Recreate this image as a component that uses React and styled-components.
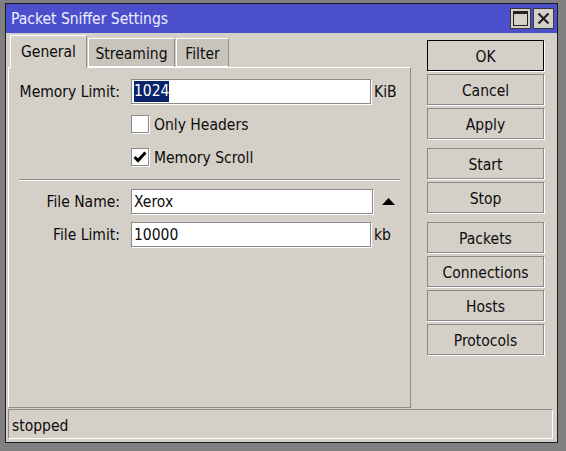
import React from "react";
import styled, { createGlobalStyle } from "styled-components";

const Global = createGlobalStyle`
  html, body {
    margin: 0;
    padding: 0;
    background: #808080;
  }
  body {
    font-family: "DejaVu Sans Condensed", "DejaVu Sans", sans-serif;
    font-size: 15.5px;
    color: #0c0c0c;
  }
  * { box-sizing: border-box; }
`;

const Window = styled.div`
  margin: 3px 0 0 5px;
  width: 553px;
  height: 440px;
  border: 1px solid #1c1c1c;
  display: flex;
  flex-direction: column;
  background: #d4d0c8;
`;

const TitleBar = styled.div`
  height: 29px;
  background: #4b4fcb;
  display: flex;
  align-items: center;
  padding: 0 3px 0 5px;
  color: #eef0ff;
`;

const Title = styled.div`
  flex: 1;
  font-size: 15.5px;
  padding-top: 1px;
`;

const TitleButton = styled.div`
  width: 21px;
  height: 21px;
  margin-left: 2px;
  background: #d4d0c8;
  border: 1px solid #3a3a3a;
  display: flex;
  align-items: center;
  justify-content: center;
`;

const Body = styled.div`
  flex: 1;
  display: flex;
  flex-direction: column;
  padding: 2px 4px 3px 2px;
`;

const Main = styled.div`
  flex: 1;
  display: flex;
`;

const LeftCol = styled.div`
  width: 403px;
  display: flex;
  flex-direction: column;
`;

const Tabs = styled.div`
  height: 32px;
  display: flex;
  align-items: flex-end;
  padding-left: 2px;
  position: relative;
  z-index: 1;
`;

const Tab = styled.div`
  height: ${(p) => (p.$active ? "33px" : "29px")};
  margin-bottom: ${(p) => (p.$active ? "-1px" : "0")};
  width: ${(p) => p.$w}px;
  margin-right: 1px;
  display: flex;
  align-items: center;
  justify-content: center;
  padding-bottom: ${(p) => (p.$active ? "1px" : "0")};
  padding-top: ${(p) => (p.$active ? "0" : "2px")};
  background: ${(p) => (p.$active ? "#d4d0c8" : "#c8c4bc")};
  border-top: 1px solid #ffffff;
  border-left: 1px solid #ffffff;
  border-right: 1px solid #8c8c8c;
  border-bottom: ${(p) => (p.$active ? "none" : "1px solid #ffffff")};
`;

const Panel = styled.div`
  flex: 1;
  border-top: 1px solid #ffffff;
  border-left: 1px solid #ffffff;
  border-right: 1px solid #8a8a8a;
  border-bottom: 1px solid #8a8a8a;
  padding-top: 11px;
  display: flex;
  flex-direction: column;
`;

const Row = styled.div`
  display: flex;
  align-items: center;
  margin-top: ${(p) => p.$mt || 0}px;
  height: ${(p) => p.$h || 25}px;
`;

const Label = styled.div`
  width: 122px;
  padding-left: 10px;
  padding-right: 11px;
  text-align: right;
  white-space: nowrap;
`;

const Input = styled.div`
  width: ${(p) => p.$w}px;
  height: 25px;
  background: #ffffff;
  border: 1px solid #8a8a8a;
  box-shadow: 1px 1px 0 #ffffff;
  display: flex;
  align-items: center;
  padding-left: 2px;
`;

const Selected = styled.span`
  background: #0a246a;
  color: #ffffff;
  padding: 1px 0 2px;
`;

const Unit = styled.div`
  margin-left: 3px;
`;

const CheckBox = styled.div`
  width: 18px;
  height: 18px;
  background: #ffffff;
  border: 1px solid #8a8a8a;
  box-shadow: 1px 1px 0 #ffffff;
  margin-left: 122px;
  margin-right: 5px;
  display: flex;
  align-items: center;
  justify-content: center;
`;

const CheckLabel = styled.span`
  padding-top: 2px;
`;

const Separator = styled.div`
  margin: 13px 10px 0 10px;
  height: 2px;
  border-top: 1px solid #8a8a8a;
  border-bottom: 1px solid #ffffff;
`;

const RightCol = styled.div`
  margin-left: 16px;
  padding-top: 5px;
  width: 117px;
  display: flex;
  flex-direction: column;
`;

const Button = styled.div`
  height: 31px;
  margin-top: ${(p) => p.$mt}px;
  border: 1px solid ${(p) => (p.$default ? "#000000" : "#8a8a8a")};
  box-shadow: 1px 1px 0 #ffffff;
  display: flex;
  align-items: center;
  justify-content: center;
  padding-top: 2px;
`;

const StatusBar = styled.div`
  margin-top: 1px;
  height: 30px;
  border-top: 1px solid #8a8a8a;
  border-left: 1px solid #8a8a8a;
  border-right: 1px solid #ffffff;
  border-bottom: 1px solid #ffffff;
  display: flex;
  align-items: center;
  padding: 3px 0 0 3px;
`;

const buttons = [
  { label: "OK", mt: 0, def: true },
  { label: "Cancel", mt: 3 },
  { label: "Apply", mt: 3 },
  { label: "Start", mt: 9 },
  { label: "Stop", mt: 3 },
  { label: "Packets", mt: 9 },
  { label: "Connections", mt: 3 },
  { label: "Hosts", mt: 3 },
  { label: "Protocols", mt: 3 },
];

export default function App() {
  return (
    <>
      <Global />
      <Window>
        <TitleBar>
          <Title>Packet Sniffer Settings</Title>
          <TitleButton>
            <svg width="15" height="15" viewBox="0 0 15 15">
              <rect x="0.5" y="0.5" width="14" height="14" fill="none" stroke="#222" />
              <rect x="0" y="0" width="15" height="3" fill="#222" />
            </svg>
          </TitleButton>
          <TitleButton>
            <svg width="13" height="13" viewBox="0 0 13 13">
              <path d="M1.5 1.5 L11.5 11.5 M11.5 1.5 L1.5 11.5" stroke="#222" strokeWidth="2.2" />
            </svg>
          </TitleButton>
        </TitleBar>
        <Body>
          <Main>
            <LeftCol>
              <Tabs>
                <Tab $active $w={77}>General</Tab>
                <Tab $w={87}>Streaming</Tab>
                <Tab $w={53}>Filter</Tab>
              </Tabs>
              <Panel>
                <Row>
                  <Label>Memory Limit:</Label>
                  <Input $w={240}>
                    <Selected>1024</Selected>
                  </Input>
                  <Unit>KiB</Unit>
                </Row>
                <Row $mt={11} $h={18}>
                  <CheckBox />
                  <CheckLabel>Only Headers</CheckLabel>
                </Row>
                <Row $mt={15} $h={18}>
                  <CheckBox>
                    <svg width="14" height="12" viewBox="0 0 14 12">
                      <path d="M1.5 6 L5 9.5 L12.5 1.5" fill="none" stroke="#000" strokeWidth="3" />
                    </svg>
                  </CheckBox>
                  <CheckLabel>Memory Scroll</CheckLabel>
                </Row>
                <Separator />
                <Row $mt={8}>
                  <Label>File Name:</Label>
                  <Input $w={242}>Xerox</Input>
                  <svg width="13" height="7" viewBox="0 0 13 7" style={{ marginLeft: 9 }}>
                    <polygon points="6.5,0 13,7 0,7" fill="#000" />
                  </svg>
                </Row>
                <Row $mt={8}>
                  <Label>File Limit:</Label>
                  <Input $w={240}>10000</Input>
                  <Unit>kb</Unit>
                </Row>
              </Panel>
            </LeftCol>
            <RightCol>
              {buttons.map((b) => (
                <Button key={b.label} $mt={b.mt} $default={b.def}>
                  {b.label}
                </Button>
              ))}
            </RightCol>
          </Main>
          <StatusBar>stopped</StatusBar>
        </Body>
      </Window>
    </>
  );
}
